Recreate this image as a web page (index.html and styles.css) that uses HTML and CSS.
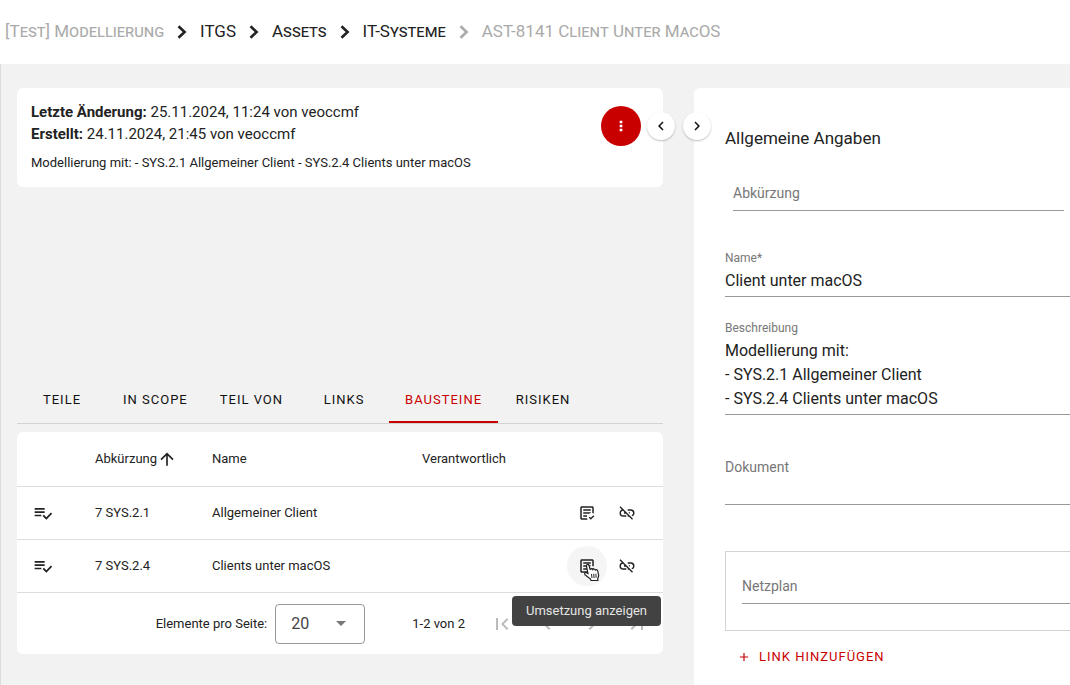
FILE: index.html
```html
<!DOCTYPE html>
<html lang="de">
<head>
<meta charset="utf-8">
<title>AST-8141 Client unter macOS</title>
<link rel="stylesheet" href="styles.css">
</head>
<body>
<svg class="sprite" aria-hidden="true">
  <symbol id="crumb" viewBox="0 0 10 14"><path d="M1.5 1.2 7.6 7 1.5 12.8" fill="none" stroke="currentColor" stroke-width="2.6"/></symbol>
  <symbol id="left" viewBox="0 0 24 24"><path d="M15.41 16.58 10.83 12l4.58-4.59L14 6l-6 6 6 6z"/></symbol>
  <symbol id="right" viewBox="0 0 24 24"><path d="M8.59 16.58 13.17 12 8.59 7.41 10 6l6 6-6 6z"/></symbol>
  <symbol id="first" viewBox="0 0 24 24"><path d="M18.41 16.59 13.82 12l4.59-4.59L17 6l-6 6 6 6zM6 6h2v12H6z"/></symbol>
  <symbol id="last" viewBox="0 0 24 24"><path d="M5.59 7.41 10.18 12l-4.59 4.59L7 18l6-6-6-6zM16 6h2v12h-2z"/></symbol>
  <symbol id="dots" viewBox="0 0 24 24"><path d="M10 4h4v4h-4zM10 10h4v4h-4zM10 16h4v4h-4z"/></symbol>
  <symbol id="up" viewBox="0 0 24 24"><path d="M13 20h-2V8l-5.500 5.500-1.420-1.420L12 4.160l7.920 7.920-1.420 1.420L13 8z"/></symbol>
  <symbol id="playlist" viewBox="0 0 24 24"><path d="M14 10H2v2h12zm0-4H2v2h12zM2 16h8v-2H2zm19.500-4.500L23 13l-6.990 7-4.510-4.500L13 14l3.010 3z"/></symbol>
  <symbol id="doc" viewBox="0 0 24 24"><path d="M17,21L14.25,18L15.41,16.84L17,18.43L20.59,14.84L21.75,16.25M12.8,21H5C3.89,21 3,20.11 3,19V5C3,3.89 3.89,3 5,3H19C20.11,3 21,3.89 21,5V12.8C20.39,12.45 19.72,12.2 19,12.08V5H5V19H12.08C12.2,19.72 12.45,20.39 12.8,21M12,17H7V15H12M14.68,13H7V11H17V12.08C16.15,12.22 15.37,12.54 14.68,13M17,9H7V7H17"/></symbol>
  <symbol id="unlink" viewBox="0 0 24 24"><path d="M17,7H13V8.9H17C18.71,8.9 20.1,10.29 20.1,12C20.1,13.43 19.12,14.63 17.79,15L19.25,16.44C20.88,15.61 22,13.95 22,12A5,5 0 0,0 17,7M16,11H13.81L15.81,13H16V11M2,4.27L5.11,7.38C3.29,8.12 2,9.91 2,12A5,5 0 0,0 7,17H11V15.1H7C5.29,15.1 3.9,13.71 3.9,12C3.9,10.41 5.11,9.1 6.66,8.93L8.73,11H8V13H10.73L13,15.27V17H14.73L18.74,21L20,19.74L3.27,3L2,4.27Z"/></symbol>
  <symbol id="plus" viewBox="0 0 24 24"><path d="M19 13h-6v6h-2v-6H5v-2h6V5h2v6h6z"/></symbol>
</svg>

<nav class="crumbs" aria-label="Navigationspfad">
  <span class="crumb muted">[Test] Modellierung</span>
  <svg class="sep"><use href="#crumb"/></svg>
  <a class="crumb" href="#">ITGS</a>
  <svg class="sep"><use href="#crumb"/></svg>
  <a class="crumb" href="#">Assets</a>
  <svg class="sep"><use href="#crumb"/></svg>
  <a class="crumb" href="#">IT-Systeme</a>
  <svg class="sep muted"><use href="#crumb"/></svg>
  <span class="crumb muted">AST-8141 Client Unter MacOS</span>
</nav>

<main class="page">
  <section class="overview">
    <article class="card summary">
      <div class="summary-text">
        <p class="meta"><b>Letzte Änderung:</b> 25.11.2024, 11:24 von veoccmf</p>
        <p class="meta"><b>Erstellt:</b> 24.11.2024, 21:45 von veoccmf</p>
        <p class="note">Modellierung mit: - SYS.2.1 Allgemeiner Client - SYS.2.4 Clients unter macOS</p>
      </div>
      <button class="menu" type="button" aria-label="Aktionen"><svg class="i16"><use href="#dots"/></svg></button>
    </article>

    <div class="tabs" role="tablist">
      <button class="tab" role="tab" type="button">TEILE</button>
      <button class="tab" role="tab" type="button">IN SCOPE</button>
      <button class="tab" role="tab" type="button">TEIL VON</button>
      <button class="tab" role="tab" type="button">LINKS</button>
      <button class="tab active" role="tab" type="button" aria-selected="true">BAUSTEINE</button>
      <button class="tab" role="tab" type="button">RISIKEN</button>
    </div>

    <div class="card list">
      <table class="table">
        <colgroup><col class="c-icon"><col class="c-abbr"><col class="c-name"><col><col class="c-act"></colgroup>
        <thead>
          <tr><th></th><th><span class="sort">Abkürzung<svg class="i20"><use href="#up"/></svg></span></th><th>Name</th><th>Verantwortlich</th><th></th></tr>
        </thead>
        <tbody>
          <tr>
            <td><svg class="i20"><use href="#playlist"/></svg></td>
            <td>7 SYS.2.1</td><td>Allgemeiner Client</td><td></td>
            <td class="actions"><div class="action-row">
              <button class="action" type="button" aria-label="Umsetzung anzeigen"><svg class="i18"><use href="#doc"/></svg></button>
              <button class="action" type="button" aria-label="Verknüpfung lösen"><svg class="i18"><use href="#unlink"/></svg></button>
            </div></td>
          </tr>
          <tr>
            <td><svg class="i20"><use href="#playlist"/></svg></td>
            <td>7 SYS.2.4</td><td>Clients unter macOS</td><td></td>
            <td class="actions"><div class="action-row">
              <button class="action hover" type="button" aria-describedby="tip"><svg class="i18"><use href="#doc"/></svg></button>
              <button class="action" type="button" aria-label="Verknüpfung lösen"><svg class="i18"><use href="#unlink"/></svg></button>
              <svg class="pointer" viewBox="0 0 18 20"><path d="M5 11.500 3.500 4.300C3.100 2.300 5.500 1.800 6 3.500l1.300 4.300c.3-1.500 2-1.500 2.500-.2.500-1 2.200-.8 2.500.5.900-.8 2.300-.2 2.500 1l.9 4.500-1 3.200.2 1.700H8l-.5-1.500L2 12.700C.8 11.200 2.500 9.800 3.700 10.900z" fill="#fff" stroke="#222" stroke-width="1.200"/><path d="m8.500 12 .5 4m1.700-4.300.4 4.300m1.800-4.300.2 4" stroke="#222" fill="none"/></svg>
              <div class="tooltip" id="tip" role="tooltip">Umsetzung anzeigen</div>
            </div></td>
          </tr>
        </tbody>
      </table>
      <div class="pager">
        <label for="size">Elemente pro Seite:</label>
        <div class="select">
          <select id="size"><option>20</option></select>
          <svg class="caret" viewBox="0 0 10 5"><path d="M0 0h10L5 5z"/></svg>
        </div>
        <span class="range">1-2 von 2</span>
        <div class="pages">
          <button type="button" disabled aria-label="Erste Seite"><svg class="i24"><use href="#first"/></svg></button>
          <button type="button" disabled aria-label="Vorherige Seite"><svg class="i24"><use href="#left"/></svg></button>
          <button type="button" disabled aria-label="Nächste Seite"><svg class="i24"><use href="#right"/></svg></button>
          <button type="button" disabled aria-label="Letzte Seite"><svg class="i24"><use href="#last"/></svg></button>
        </div>
      </div>
    </div>
  </section>

  <div class="splitter">
    <button class="round" type="button" aria-label="Nach links"><svg class="i18"><use href="#left"/></svg></button>
    <button class="round" type="button" aria-label="Nach rechts"><svg class="i18"><use href="#right"/></svg></button>
  </div>

  <form class="form">
    <h1 class="form-title">Allgemeine Angaben</h1>
    <div class="field overlay short"><label for="abbr">Abkürzung</label><input id="abbr" type="text"></div>
    <div class="field"><label for="name">Name*</label><input id="name" type="text" value="Client unter macOS"></div>
    <div class="field desc"><label for="desc">Beschreibung</label><textarea id="desc" rows="3">Modellierung mit:
- SYS.2.1 Allgemeiner Client
- SYS.2.4 Clients unter macOS</textarea></div>
    <div class="field overlay tall"><label for="doc-in">Dokument</label><input id="doc-in" type="text"></div>
    <div class="group">
      <div class="field overlay"><label for="plan">Netzplan</label><input id="plan" type="text"></div>
    </div>
    <button class="add" type="button"><svg class="i14"><use href="#plus"/></svg>LINK HINZUFÜGEN</button>
  </form>
</main>
</body>
</html>
```

FILE: styles.css
```css
* { box-sizing: border-box; }

body {
  margin: 0;
  min-height: 100vh;
  display: flex;
  flex-direction: column;
  overflow: hidden;
  background: #fff;
  color: #222;
  font-family: Roboto, "Liberation Sans", sans-serif;
  font-size: 13px;
  line-height: 20px;
}

button, input, select, textarea { font: inherit; color: inherit; }
button { border: 0; padding: 0; background: none; }
svg { display: block; flex: none; fill: currentColor; }
.sprite { position: absolute; width: 0; height: 0; }
.i14 { width: 14px; height: 14px; }
.i16 { width: 16px; height: 16px; }
.i18 { width: 18px; height: 18px; }
.i20 { width: 20px; height: 20px; }
.i24 { width: 24px; height: 24px; }

/* breadcrumb */
.crumbs {
  display: flex;
  align-items: center;
  gap: 13px;
  height: 64px;
  padding-left: 5px;
  white-space: nowrap;
}
.crumb { padding-bottom: 2px; color: #222; font-size: 17px; font-variant: small-caps; text-decoration: none; }
.sep { width: 10px; height: 14px; }
.muted { color: #aaa; }

/* page */
.page {
  flex: 1;
  display: grid;
  grid-template-columns: minmax(0, 646fr) 31px minmax(0, 376fr);
  padding: 24px 0 0 16px;
  border-left: 1px solid #ddd;
  background: #f2f2f2;
}
.card { background: #fff; border-radius: 6px; }

.summary { display: flex; justify-content: space-between; height: 99px; padding: 13px 22px 13px 14px; }
.summary p { margin: 0; }
.meta { font-size: 15px; line-height: 22px; }
.summary .note { margin-top: 8px; }
.menu {
  display: grid;
  place-items: center;
  width: 40px;
  height: 40px;
  margin-top: 5px;
  border-radius: 50%;
  background: #c90000;
  color: #fff;
}

/* tabs */
.tabs { display: flex; margin-top: 189px; border-bottom: 1px solid #d3d3d3; }
.tab { min-width: 90px; height: 47px; padding: 0 16px; letter-spacing: 1px; white-space: nowrap; color: #111; }
.tab.active { color: #c90000; box-shadow: inset 0 -2px #c90000; }

/* table */
.list { margin-top: 8px; }
.table { width: 100%; table-layout: fixed; border-collapse: separate; border-spacing: 0; }
.c-icon { width: 62px; }
.c-abbr { width: 117px; }
.c-name { width: 210px; }
.c-act { width: 112px; }
.table th, .table td { padding: 0 16px; border-bottom: 1px solid #ddd; text-align: left; font-weight: 400; white-space: nowrap; }
.table th { height: 55px; }
.table td { height: 53px; }
.sort { display: flex; align-items: center; }
.action-row { position: relative; display: flex; justify-content: flex-end; }
.action { display: grid; place-items: center; width: 40px; height: 40px; border-radius: 50%; }
.hover { background: #f5f5f5; }
.pointer { position: absolute; left: 16px; top: 16px; width: 18px; height: 20px; }
.tooltip {
  position: absolute;
  right: -14px;
  top: 50px;
  z-index: 2;
  padding: 5px 14px;
  border-radius: 4px;
  background: #424242;
  color: #e5e5e5;
}

.pager { display: flex; align-items: center; justify-content: flex-end; height: 61px; padding-right: 4px; }
.select { display: grid; align-items: center; width: 90px; margin: 0 47px 0 8px; }
.select > * { grid-area: 1 / 1; }
.select select {
  appearance: none;
  width: 100%;
  height: 40px;
  padding: 0 15px;
  border: 1px solid #999;
  border-radius: 4px;
  background: #fff;
  color: #444;
  font-size: 16px;
}
.caret { justify-self: end; width: 10px; height: 5px; margin-right: 19px; color: #777; pointer-events: none; }
.pages { display: flex; margin-left: 14px; }
.pages button { display: grid; place-items: center; width: 45px; height: 40px; color: #bbb; }

/* panel toggles */
.splitter { position: relative; z-index: 1; display: flex; justify-content: center; gap: 8px; padding-top: 24px; }
.round {
  flex: none;
  display: grid;
  place-items: center;
  width: 28px;
  height: 28px;
  border-radius: 50%;
  background: #fff;
  color: #111;
  box-shadow: 0 1px 2px rgba(0, 0, 0, .25);
}

/* form */
.form { padding: 38px 0 0 31px; background: #fff; border-radius: 6px 0 0 0; }
.form-title { margin: 0; font-size: 17px; font-weight: 400; line-height: 24px; }
.field { display: grid; margin-top: 41px; }
.field label { color: #777; font-size: 12px; line-height: 12px; }
.field input, .field textarea {
  width: 100%;
  min-width: 0;
  padding: 0;
  border: 0;
  border-bottom: 1px solid #999;
  border-radius: 0;
  outline: 0;
  background: none;
  font-size: 16px;
  line-height: 24px;
  resize: none;
  overflow: hidden;
}
.field input { height: 33px; }
.field textarea { height: 81px; padding-top: 5px; }
.field.desc { margin-top: 25px; }
.overlay > * { grid-area: 1 / 1; }
.overlay label { padding-top: 3px; font-size: 14px; line-height: 24px; }
.overlay.short { margin: 28px 6px 0 8px; }
.overlay.tall { margin-top: 37px; }
.overlay.tall input { height: 53px; }
.group { margin-top: 46px; padding: 19px 0 26px 16px; border: 1px solid #d3d3d3; border-right: 0; }
.group .field { margin: 0; }
.add { display: flex; align-items: center; gap: 8px; margin: 16px 0 0 12px; color: #c90000; letter-spacing: 1px; }
```
